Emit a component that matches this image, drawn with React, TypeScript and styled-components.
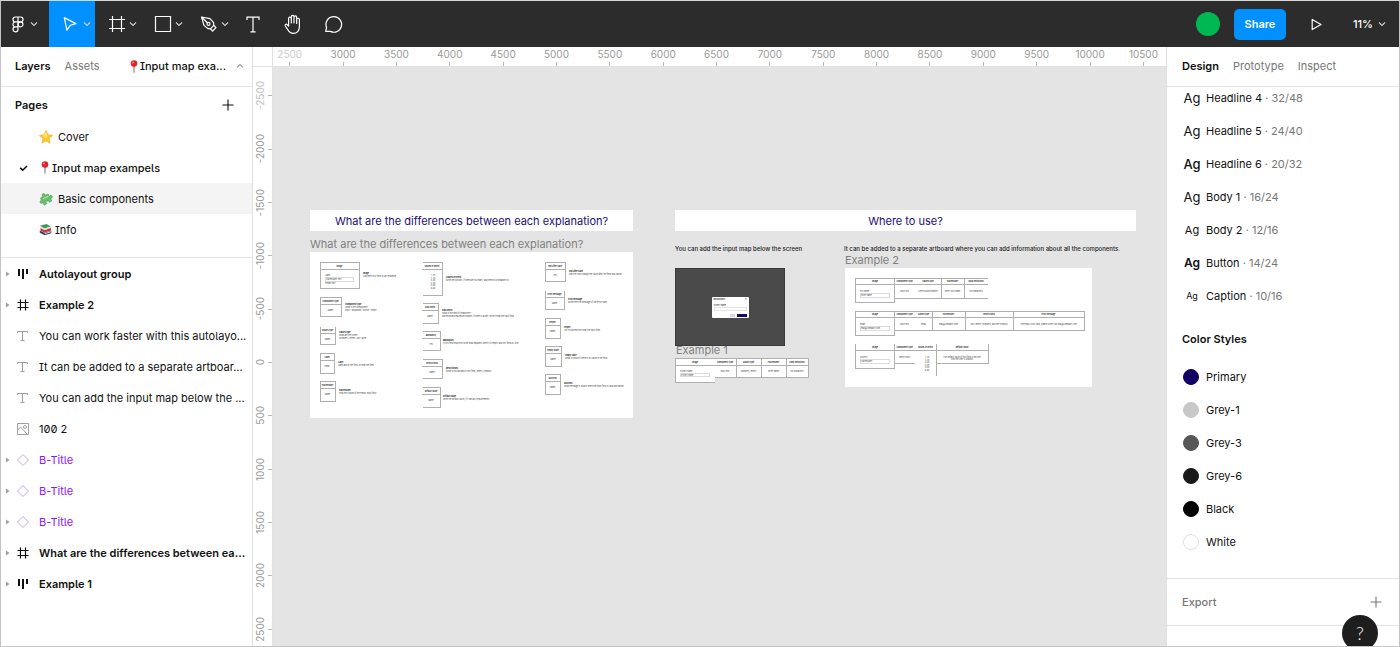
import React from "react";
import styled, { createGlobalStyle, css } from "styled-components";

const Global = createGlobalStyle`
  *, *::before, *::after { box-sizing: border-box; }
  body { margin: 0; font-family: Inter, "Liberation Sans", sans-serif; font-size: 11px; line-height: 16px; color: #111; }
  button { font: inherit; color: inherit; background: none; border: 0; padding: 0; margin: 0; cursor: pointer; }
  ul { list-style: none; margin: 0; padding: 0; }
  h2 { font: inherit; font-weight: 600; margin: 0; }
  svg { display: block; flex: none; }
`;

/* ---------- shell ---------- */
const Shell = styled.div`
  position: relative;
  display: flex;
  flex-direction: column;
  height: 100vh;
  border: 1px solid #c4c4c4;
  border-top-color: #d6d6d6;
  overflow: hidden;
  background: #fff;
`;
const Body = styled.div`
  flex: 1;
  min-height: 0;
  display: grid;
  grid-template-columns: 252px minmax(0, 1fr) 233px;
`;

/* ---------- toolbar ---------- */
const Toolbar = styled.header`
  flex: none;
  display: flex;
  justify-content: space-between;
  height: 46px;
  background: #2c2c2c;
  color: #fff;
`;
const ToolGroup = styled.nav`
  display: flex;
`;
const Tool = styled.button<{ $active?: boolean }>`
  display: flex;
  align-items: center;
  justify-content: center;
  gap: 3px;
  width: 46px;
  padding-left: 8px;
  background: ${(p) => (p.$active ? "#0090ff" : "transparent")};
`;
const MenuTool = styled(Tool)`
  gap: 6px;
  width: 48px;
  padding-left: 0;
`;
const SingleTool = styled(Tool)`
  width: 40px;
  padding-left: 0;
`;
const Actions = styled.div`
  display: flex;
  align-items: center;
`;
const Avatar = styled.span`
  width: 24px;
  height: 24px;
  border-radius: 50%;
  background: #00b853;
`;
const Share = styled.button`
  width: 52px;
  height: 31px;
  margin-left: 14px;
  border-radius: 5px;
  background: #0090ff;
  font-weight: 600;
`;
const Play = styled.button`
  margin-left: 24px;
`;
const Zoom = styled.button`
  display: flex;
  align-items: center;
  gap: 5px;
  margin: 0 13px 0 30px;
  font-weight: 500;
`;

/* ---------- side panels ---------- */
const Panel = styled.aside<{ $side: "left" | "right" }>`
  display: flex;
  flex-direction: column;
  min-height: 0;
  overflow: hidden;
  background: #fff;
  ${(p) => (p.$side === "left" ? "border-right" : "border-left")}: 1px solid #e0e0e0;
`;
const Tabs = styled.div<{ $inset: number }>`
  flex: none;
  display: flex;
  align-items: center;
  gap: 14px;
  height: 40px;
  padding: 0 8px 1px ${(p) => p.$inset}px;
  border-bottom: 1px solid #e2e2e2;
`;
const Tab = styled.button<{ $active?: boolean }>`
  font-weight: ${(p) => (p.$active ? 600 : 400)};
  color: ${(p) => (p.$active ? "#111" : "#777")};
`;

/* Layer and page names use the disambiguated forms of I, l and 0. */
const plainForms = css`
  font-feature-settings: "ss02", "zero";
`;
const PageSelect = styled.button`
  display: flex;
  align-items: center;
  margin-left: auto;
  font-weight: 500;
  ${plainForms}
`;
const PageSelectText = styled.span`
  margin-right: 10px;
`;
const SectionHead = styled.div`
  display: flex;
  align-items: center;
  justify-content: space-between;
  height: 34px;
  padding: 2px 18px 0 14px;
`;
const Pages = styled.section`
  flex: none;
  padding-bottom: 12px;
  border-bottom: 1px solid #e2e2e2;
`;
const PageRow = styled.li<{ $hover?: boolean; $current?: boolean }>`
  display: flex;
  align-items: center;
  height: 31px;
  padding-left: 14px;
  background: ${(p) => (p.$hover ? "#f4f4f4" : "transparent")};
  font-weight: ${(p) => (p.$current ? 500 : 400)};
  ${plainForms}
`;
const PageMark = styled.span`
  width: 24px;
  padding-left: 4px;
`;
const PageEmoji = styled.span<{ $width: number }>`
  width: ${(p) => p.$width}px;
`;
const LayerRow = styled.li<{ $kind: Kind; $bold?: boolean }>`
  display: grid;
  grid-template-columns: 8px 26px minmax(0, 1fr);
  align-items: center;
  height: 31px;
  padding-left: 4px;
  font-weight: ${(p) => (p.$bold ? 600 : 400)};
  ${plainForms}
  ${(p) => p.$kind === "instance" && css`color: #9013fe;`}
`;
const LayerIcon = styled.span`
  display: flex;
  padding-left: 3px;
`;
const LayerName = styled.span`
  white-space: nowrap;
`;

/* ---------- canvas ---------- */
const CanvasArea = styled.main`
  display: grid;
  grid-template: 20px minmax(0, 1fr) / 20px minmax(0, 1fr);
  min-height: 0;
  background: #e4e4e4;
`;
const Corner = styled.div`
  background: #fff;
  border: solid #e2e2e2;
  border-width: 0 1px 1px 0;
`;
const TopRuler = styled.div`
  overflow: hidden;
  background: #fff;
  border-bottom: 1px solid #e2e2e2;
`;
const TopMarks = styled.ol`
  display: flex;
  width: calc(100% + 14px);
  height: 100%;
  margin: 0 0 0 -10px;
  padding: 0;
  list-style: none;
`;
const TopMark = styled.li<{ $faint?: boolean }>`
  flex: 1 1 0;
  display: flex;
  flex-direction: column;
  align-items: center;
  justify-content: space-between;
  font-size: 10px;
  line-height: 15px;
  color: ${(p) => (p.$faint ? "#cccccc" : "#999")};
  &::after { content: ""; width: 1px; height: 4px; background: #b8b8b8; }
`;
const SideRuler = styled.div`
  overflow: hidden;
  background: #fff;
  border-right: 1px solid #e2e2e2;
`;
const SideMarks = styled.ol`
  display: flex;
  flex-direction: column;
  height: calc(100% + 8px);
  margin: 2px 0 0;
  padding: 0;
  list-style: none;
`;
const SideMark = styled.li<{ $faint?: boolean }>`
  flex: 1 1 0;
  display: flex;
  align-items: center;
  justify-content: space-between;
  font-size: 10px;
  color: ${(p) => (p.$faint ? "#c0c0c0" : "#999")};
  &::after { content: ""; width: 4px; height: 1px; background: #b8b8b8; }
`;
const SideLabel = styled.span`
  writing-mode: vertical-rl;
  transform: rotate(180deg);
  line-height: 15px;
`;
const Canvas = styled.div`
  position: relative;
  overflow: hidden;
`;
const Node = styled.div<{ $x: number; $y: number }>`
  position: absolute;
  left: ${(p) => p.$x}px;
  top: ${(p) => p.$y}px;
  white-space: nowrap;
`;
const TitleFrame = styled(Node)<{ $w: number }>`
  width: ${(p) => p.$w}px;
  height: 21px;
  background: #fff;
  color: #1c0d75;
  text-align: center;
  line-height: 22px;
`;
const FrameLabel = styled(Node)`
  color: #808080;
`;
const Note = styled(Node)`
  font-size: 6px;
  font-weight: 500;
  line-height: 8px;
  color: #222;
`;

/* ---------- right panel ---------- */
const Styles = styled.div`
  flex: none;
  margin-top: -6px;
  padding-bottom: 20px;
  border-bottom: 1px solid #e2e2e2;
`;
const StyleRow = styled.li`
  display: grid;
  grid-template-columns: 18px 1fr;
  column-gap: 5px;
  align-items: center;
  height: 33px;
  padding-left: 16px;
`;
const Sample = styled.span<{ $size: number; $weight: number }>`
  text-align: center;
  font-size: ${(p) => p.$size}px;
  font-weight: ${(p) => p.$weight};
`;
const Spec = styled.span`
  color: #777;
`;
const StylesTitle = styled.h2`
  height: 33px;
  margin: 11px 0 4px;
  padding-left: 15px;
  line-height: 33px;
`;
const Swatch = styled.span<{ $color: string }>`
  width: 16px;
  height: 16px;
  border-radius: 50%;
  background: ${(p) => p.$color};
  border: 1px solid ${(p) => (p.$color === "#ffffff" ? "#e0e0e0" : p.$color)};
`;
const Export = styled.div`
  flex: none;
  display: flex;
  align-items: center;
  justify-content: space-between;
  height: 47px;
  padding: 0 17px 0 15px;
  border-bottom: 1px solid #e2e2e2;
  color: #777;
  font-weight: 500;
`;
const Help = styled.button`
  position: absolute;
  right: 21px;
  bottom: -5px;
  display: flex;
  align-items: center;
  justify-content: center;
  width: 36px;
  height: 36px;
  border-radius: 50%;
  background: #1e1e1e;
  color: #fff;
  font-family: Lato, Inter, sans-serif;
  font-size: 18px;
  font-weight: 300;
`;

/* ---------- icons ---------- */
const Chevron = ({ up, color = "#d0d0d0" }: { up?: boolean; color?: string }) => (
  <svg width="8" height="6" viewBox="0 0 8 6" fill="none" stroke={color} strokeWidth="1.1">
    <path d={up ? "M1 4.5 4 1.5 7 4.5" : "M1 1.5 4 4.5 7 1.5"} />
  </svg>
);
const FigmaIcon = () => (
  <svg width="12" height="17" viewBox="0 0 12 17" fill="none" stroke="#fff" strokeWidth="1.2">
    <path d="M6 1H3.4a2.4 2.4 0 0 0 0 4.9H6zM6 1h2.6a2.4 2.4 0 0 1 0 4.9H6zM6 5.9H3.4a2.4 2.4 0 0 0 0 4.9H6zM6 10.8H3.4A2.5 2.5 0 1 0 6 13.4z" />
    <circle cx="8.5" cy="8.35" r="2.45" />
  </svg>
);
const MoveIcon = () => (
  <svg width="18" height="18" viewBox="0 0 18 18" fill="none" stroke="#fff" strokeWidth="1.2" strokeLinejoin="round">
    <path d="M2.3 2.6 13.8 8.6 8.2 10.3 4.9 15.2z" />
  </svg>
);
const FrameIcon = () => (
  <svg width="18" height="18" viewBox="0 0 18 18" fill="none" stroke="#fff" strokeWidth="1.2">
    <path d="M4.5 1v16M13.500 1v16M1 4.500h16M1 13.500h16" />
  </svg>
);
const RectIcon = () => (
  <svg width="18" height="18" viewBox="0 0 18 18" fill="none" stroke="#fff" strokeWidth="1.2">
    <path d="M1.5 1.5h15v15h-15z" />
  </svg>
);
const PenIcon = () => (
  <svg width="18" height="18" viewBox="0 0 18 18" fill="none" stroke="#fff" strokeWidth="1.2" strokeLinejoin="round">
    <path d="M1.500 2 10 3.600 13.600 7.600 13.800 10.400 10.400 13.800 7.600 13.400 4 10.400z" />
    <path d="M10.400 13.800 12.600 16 16 12.600 13.800 10.400M1.500 2 7.400 7.800" />
    <circle cx="8.500" cy="8.900" r="1.500" />
  </svg>
);
const TextIcon = () => (
  <svg width="14" height="17" viewBox="0 0 14 17" fill="none" stroke="#fff" strokeWidth="1.2">
    <path d="M1 4V1.200h12V4M7 1.200v14.400M4.400 15.800h5.200" />
  </svg>
);
const HandIcon = () => (
  <svg width="20" height="21" viewBox="0 0 20 21" fill="none" stroke="#fff" strokeWidth="1.2" strokeLinecap="round" strokeLinejoin="round">
    <path d="M5.6 12.2V4.4a1.35 1.35 0 0 1 2.7 0V9M8.3 9V2.7a1.35 1.35 0 0 1 2.7 0V9M11 9V3.2a1.35 1.35 0 0 1 2.7 0v6.3M13.7 9.5V5.6a1.35 1.35 0 0 1 2.7 0v7.2c0 3.8-2.5 6.6-5.9 6.6-2.9 0-4.4-1.3-5.6-3.6L2.3 12c-.7-1.2.9-2.4 1.9-1.3l1.4 1.5" />
  </svg>
);
const CommentIcon = () => (
  <svg width="19" height="19" viewBox="0 0 19 19" fill="none" stroke="#fff" strokeWidth="1.2" strokeLinejoin="round">
    <path d="M9.800 1.600a7.800 7.800 0 1 1-3.400 14.800H1.700l.9-3.900A7.800 7.800 0 0 1 9.800 1.600z" />
  </svg>
);
const PlayIcon = () => (
  <svg width="13" height="13" viewBox="0 0 13 13" fill="none" stroke="#fff" strokeWidth="1.2" strokeLinejoin="round">
    <path d="M2.2 1.4 11 6.5 2.2 11.6z" />
  </svg>
);
const PlusIcon = ({ color }: { color: string }) => (
  <svg width="12" height="12" viewBox="0 0 12 12" fill="none" stroke={color} strokeWidth="1.1">
    <path d="M6 .5v11M.5 6h11" />
  </svg>
);
const CheckIcon = () => (
  <svg width="10" height="8" viewBox="0 0 10 8" fill="none" stroke="#111" strokeWidth="1.600">
    <path d="M1.200 3.800 3.700 6.200 8 2" />
  </svg>
);
const StarEmoji = () => (
  <svg width="14" height="14" viewBox="0 0 14 14">
    <path d="M7 .4 9 4.8l4.8.5-3.6 3.2 1 4.8L7 10.9l-4.200 2.400 1-4.800L.2 5.300 5 4.800z" fill="#fcc72b" stroke="#eda91e" strokeWidth=".5" />
    <path d="M7 2 8.300 5.600 7 8.500 4 6z" fill="#ffe27a" />
  </svg>
);
const PinEmoji = () => (
  <svg width="12" height="13" viewBox="-2 0 12 13">
    <path d="M3.400 6h1.200L4.300 12.600h-.6z" fill="#8f8f8f" stroke="#8f8f8f" strokeWidth=".4" />
    <circle cx="4" cy="3.500" r="3.300" fill="#e0242b" />
    <circle cx="3" cy="2.400" r="1" fill="#f98a8a" />
  </svg>
);
const PuzzleEmoji = () => (
  <svg width="14" height="14" viewBox="0 0 14 14">
    <g transform="rotate(-28 7 7)" fill="#69bd6c" stroke="#4a9c56" strokeWidth=".5">
      <path d="M2.500 3.500h3c-.9-1.500 0-2.600 1.200-2.600s2.100 1.100 1.200 2.600h3.300v2.700c1.500-.8 2.500.1 2.500 1.200s-1 1.900-2.500 1.100v3H8.300c.7-1.500-.3-2.100-1.400-2.100s-2 .6-1.300 2.100H2.500V8.700C1 9.400.2 8.500.2 7.400S1 5.400 2.500 6.200z" />
    </g>
    <path d="M4 6.800 9.400 4.400" stroke="#a5e3a0" strokeWidth="1.200" />
  </svg>
);
const BooksEmoji = () => (
  <svg width="13" height="13" viewBox="0 0 13 13">
    <path d="M.8 2.800 7.500 1l4.300 2.500-6.300 2z" fill="#3f9a5a" />
    <path d="m.8 2.800 4.700 2.700 6.300-2v1.400L5.500 7 .8 4.300z" fill="#d8e6d8" />
    <path d="m1.500 5 4 2.200L12 5.100v2.400L5.500 9.500l-4-2z" fill="#d8292f" />
    <path d="m.8 7.600 4.700 2.200L12.300 7.700v2.600l-6.600 2L.8 9.700z" fill="#33415e" />
    <path d="m5.700 10.700 6.300-1.900" stroke="#e8e8e8" strokeWidth=".9" />
  </svg>
);

type Kind = "auto" | "frame" | "text" | "image" | "instance";
const KindIcon = ({ kind }: { kind: Kind }) => {
  switch (kind) {
    case "auto":
      return (
        <svg width="14" height="14" viewBox="0 0 14 14" stroke="#111" strokeWidth="2">
          <path d="M3 2v7M7 2v10M11 2v5" />
        </svg>
      );
    case "frame":
      return (
        <svg width="14" height="14" viewBox="0 0 14 14" stroke="#111" strokeWidth="1.200">
          <path d="M4.500 1.500v11M9.500 1.500v11M1.500 4.500h11M1.500 9.500h11" />
        </svg>
      );
    case "text":
      return (
        <svg width="14" height="14" viewBox="0 0 14 14" fill="none" stroke="#a0a0a0" strokeWidth="1">
          <path d="M1.500 4V2.500h10V4M6.500 2.500v9M4.500 11.500h4" />
        </svg>
      );
    case "image":
      return (
        <svg width="14" height="14" viewBox="0 0 14 14" fill="none" stroke="#a0a0a0" strokeWidth="1">
          <path d="M1.500 1.500h11v11h-11zM1.500 8 4.500 5l7 7.500" />
          <circle cx="9" cy="5" r="1.500" />
        </svg>
      );
    case "instance":
      return (
        <svg width="14" height="14" viewBox="0 0 14 14" fill="none" stroke="#c9a6e8" strokeWidth="1">
          <path d="M7 1.500 12.500 7 7 12.500 1.500 7z" />
        </svg>
      );
  }
};
const Arrow = () => (
  <svg width="5" height="6" viewBox="0 0 5 6">
    <path d="M1 .5 4.500 3 1 5.500z" fill="#a0a0a0" />
  </svg>
);

/* ---------- miniature artboards ---------- */
type Cell = {
  x: number; y: number; w: number; h: number;
  open?: "left" | "top";
  head: string; body?: string; title: string; lines: string[]; tx: number; ty: number;
};

const explanations: Cell[] = [
  { x: 10, y: 10, w: 39, h: 26, head: "Image", title: "Image", lines: ["Add here your field or any example"], tx: 53, ty: 22 },
  { x: 10, y: 45, w: 21, h: 19, head: "Component type", body: "Name", title: "Component type", lines: ["What is the component?", "Input / dropdown / button / select"], tx: 35, ty: 53 },
  { x: 10, y: 74, w: 15, h: 18, open: "top", head: "Values type", body: "Name", title: "Values type", lines: ["What are the types?", "Numbers / letters / any value"], tx: 29, ty: 81 },
  { x: 10, y: 101, w: 14, h: 20, head: "Label", body: "Email", title: "Label", lines: ["Label above the field, or near the field"], tx: 28, ty: 111 },
  { x: 10, y: 129, w: 15, h: 20, head: "Placeholder", body: "Name", title: "Placeholder", lines: ["Help text inside of the empty input field"], tx: 29, ty: 139 },
  { x: 112, y: 10, w: 20, h: 33, open: "left", head: "Values in select", title: "Values in select", lines: ["Write the options. If there are too many, add them in a separate list"], tx: 136, ty: 26 },
  { x: 112, y: 51, w: 16, h: 20, open: "left", head: "Data limits", body: "Name", title: "Data limits", lines: ["What is the limit of characters?", "Minimum and maximum number. If there is a limit, write it near the input field"], tx: 132, ty: 59 },
  { x: 112, y: 79, w: 18, h: 19, open: "left", head: "Mandatory", body: "Yes", title: "Mandatory", lines: ["Is this field required? Write what happens when it is empty and not filled by user"], tx: 133, ty: 89 },
  { x: 112, y: 107, w: 20, h: 19, open: "left", head: "Restrictions", body: "Name", title: "Restrictions", lines: ["What is not allowed in this field, letters, symbols"], tx: 136, ty: 117 },
  { x: 112, y: 135, w: 18, h: 20, open: "left", head: "Default value", body: "Name", title: "Default value", lines: ["Write the default value, if it has any requirements"], tx: 133, ty: 145 },
  { x: 235, y: 10, w: 20, h: 19, head: "Edit after save", body: "Yes", title: "Edit after save", lines: ["Can the user change the value after the field was saved"], tx: 259, ty: 20 },
  { x: 235, y: 38, w: 19, h: 19, open: "top", head: "Error message", body: "Name", title: "Error message", lines: ["Write here the message of the error state"], tx: 258, ty: 48 },
  { x: 235, y: 66, w: 15, h: 20, head: "Helper", body: "Name", title: "Helper", lines: ["Any extra help text near the input field"], tx: 254, ty: 76 },
  { x: 235, y: 94, w: 16, h: 20, head: "Empty state", body: "Name", title: "Empty state", lines: ["What is shown if there is no value in the field"], tx: 255, ty: 104 },
  { x: 235, y: 122, w: 15, h: 20, head: "Success", body: "Name", title: "Success", lines: ["What message is shown when the input field is valid and saved"], tx: 254, ty: 132 },
];

const cellOutline = ({ x, y, w, h, open }: Cell) => {
  const l = x + 0.5;
  const t = y + 0.5;
  if (open === "left") return `M${l} ${t}h${w}v${h}h${-w}`;
  if (open === "top") return `M${l} ${t}v${h}h${w}v${-h}`;
  return `M${l} ${t}h${w}v${h}h${-w}z`;
};

const Mini = styled.svg`
  font-family: Inter, "Liberation Sans", sans-serif;
  font-size: 2px;
  fill: #444;
  & rect, & path { fill: none; stroke: #b0b0b0; stroke-width: 1; shape-rendering: crispEdges; }
  & .page { fill: #fff; stroke: none; }
  & .faint { stroke: #dcdcdc; }
  & .head { font-weight: 600; fill: #111; text-anchor: middle; }
  & .title { font-weight: 700; fill: #111; }
  & .mid { text-anchor: middle; }
`;

const selectValues = ["1-10", "2-20", "3-30", "4-40", "5-50", "6-60"];

const Explanations = () => (
  <Mini width="323" height="166" viewBox="0 0 323 166">
    <rect className="page" width="323" height="166" />
    {explanations.map((c) => (
      <g key={c.title}>
        <path d={cellOutline(c)} />
        <path d={`M${c.x} ${c.y + 7.5}h${c.w}`} />
        <text className="head" x={c.x + c.w / 2} y={c.y + 5}>{c.head}</text>
        {c.body && <text className="mid" x={c.x + c.w / 2} y={c.y + 14}>{c.body}</text>}
        <text className="title" x={c.tx} y={c.ty}>{c.title}</text>
        {c.lines.map((l, i) => (
          <text key={l} x={c.tx} y={c.ty + 3 + i * 3}>{l}</text>
        ))}
      </g>
    ))}
    <text x="15" y="24">Label</text>
    <rect className="faint" x="15.5" y="25.5" width="28" height="4" />
    <text x="16" y="28">Placeholder text</text>
    <text x="15" y="32">Helper text</text>
    {selectValues.map((t, i) => (
      <text key={t} className="mid" x="123" y={24 + i * 2.5}>{t}</text>
    ))}
  </Mini>
);

type Col = { x: number; w: number; head: string; body: string[] };
type Table = { y: number; h: number; label: string; hint: string; lines: string; cols: Col[] };

const tables: Table[] = [
  {
    y: 10, h: 20, label: "Full name", hint: "Enter name",
    lines: "M10 10.500H143M10 16.500H143M49 30.500H143M96.500 10v20M119.500 10v20",
    cols: [
      { x: 49, w: 21, head: "Component type", body: ["Input text"] },
      { x: 70, w: 26, head: "Values type", body: ["Letters and numbers"] },
      { x: 96, w: 23, head: "Placeholder", body: ["Enter your name"] },
      { x: 119, w: 24, head: "Data limitations", body: ["50 characters"] },
    ],
  },
  {
    y: 43, h: 20, label: "Email", hint: "mail@company.com",
    lines: "M10 43.500H239.500V62.500H49M10 49.500H239M87.500 43v19M120.500 43v19M168.500 43v19",
    cols: [
      { x: 49, w: 21, head: "Component type", body: ["Input text"] },
      { x: 70, w: 17, head: "Values type", body: ["Email"] },
      { x: 87, w: 33, head: "Placeholder", body: ["mail@company.com"] },
      { x: 120, w: 48, head: "Restrictions", body: ["Only letters, numbers, and the symbols"] },
      { x: 168, w: 71, head: "Error message", body: ["The email is not valid, please write it as mail@company.com"] },
    ],
  },
  {
    y: 76, h: 19, label: "Country", hint: "Placeholder",
    lines: "M10 82.500H143M49 95.500H70M91.500 76v32M91 95.500H143M143.500 76v20",
    cols: [
      { x: 49, w: 21, head: "Component type", body: ["Select input"] },
      { x: 70, w: 21, head: "Values in select", body: [] },
      { x: 91, w: 52, head: "Default value", body: ["The default value of this field is the one", "with the user's location"] },
    ],
  },
];

const ExampleTwo = () => (
  <Mini width="247" height="119" viewBox="0 0 247 119">
    <rect className="page" width="247" height="119" />
    {tables.map((t) => (
      <g key={t.label}>
        <path d={`M10.5 ${t.y}v24.5h39v-24.5`} />
        <path d={t.lines} />
        <text className="head" x="30" y={t.y + 4}>Image</text>
        <text x="15" y={t.y + 14}>{t.label}</text>
        <rect className="faint" x="15.5" y={t.y + 15.5} width="29" height="4" />
        <text x="16" y={t.y + 18}>{t.hint}</text>
        {t.cols.map((c) => (
          <g key={c.head}>
            <text className="head" x={c.x + c.w / 2} y={t.y + 4}>{c.head}</text>
            {c.body.map((b, i) => (
              <text key={b} className="mid" x={c.x + c.w / 2} y={t.y + 14 + i * 2}>{b}</text>
            ))}
          </g>
        ))}
      </g>
    ))}
    {selectValues.map((v, i) => (
      <text key={v} className="mid" x="82" y={90 + i * 2.5}>{v}</text>
    ))}
  </Mini>
);

const exampleOneCols: Col[] = [
  { x: 39, w: 22, head: "Component type", body: ["Input text"] },
  { x: 61, w: 25, head: "Values type", body: ["Numbers, letters"] },
  { x: 86, w: 25, head: "Placeholder", body: ["Enter name"] },
  { x: 111, w: 22, head: "Data limitations", body: ["50 characters"] },
];
const ExampleOne = () => (
  <Mini width="135" height="25" viewBox="0 0 135 25">
    <rect className="page" width="134" height="20" />
    <rect className="page" width="40" height="25" />
    <path d="M0 .5h134M0 7.5h134M40 19.5h94M.5 0v24.5h39" />
    <text className="head" x="20" y="5">Image</text>
    <text x="5" y="14">Project name</text>
    <rect className="faint" x="5.5" y="15.5" width="29" height="3" />
    <text x="6" y="18">Project name</text>
    {exampleOneCols.map((c) => (
      <g key={c.head}>
        <path d={`M${c.x + c.w + 0.5} 0v20`} />
        <text className="head" x={c.x + c.w / 2} y="5">{c.head}</text>
        <text className="mid" x={c.x + c.w / 2} y="14">{c.body[0]}</text>
      </g>
    ))}
  </Mini>
);

const Screen = styled(Node)`
  display: flex;
  align-items: center;
  justify-content: center;
  width: 110px;
  height: 78px;
  background: #4a4a4a;
  border: 1px solid #3a3a3a;
`;
const Dialog = styled.div`
  display: flex;
  flex-direction: column;
  width: 37px;
  height: 21px;
  padding: 1px 2px;
  border-radius: 1px;
  background: #fff;
  font-size: 2px;
  line-height: 3px;
  color: #222;
`;
const DialogHead = styled.div`
  display: flex;
  justify-content: space-between;
  margin-bottom: 3px;
  font-weight: 600;
`;
const DialogField = styled.div`
  height: 4px;
  border: 1px solid #e4e4e4;
`;
const DialogButtons = styled.div`
  display: flex;
  justify-content: flex-end;
  gap: 2px;
  margin-top: auto;
`;
const DialogButton = styled.span<{ $primary?: boolean }>`
  width: ${(p) => (p.$primary ? 10 : 5)}px;
  height: 3px;
  background: ${(p) => (p.$primary ? "#160a70" : "#d9d7ee")};
`;

/* ---------- data ---------- */
const layers: { kind: Kind; name: string; bold?: boolean; open?: boolean }[] = [
  { kind: "auto", name: "Autolayout group", bold: true, open: true },
  { kind: "frame", name: "Example 2", bold: true, open: true },
  { kind: "text", name: "You can work faster with this autolayo..." },
  { kind: "text", name: "It can be added to a separate artboar..." },
  { kind: "text", name: "You can add the input map below the ..." },
  { kind: "image", name: "100 2" },
  { kind: "instance", name: "B-Title", open: true },
  { kind: "instance", name: "B-Title", open: true },
  { kind: "instance", name: "B-Title", open: true },
  { kind: "frame", name: "What are the differences between ea...", bold: true, open: true },
  { kind: "auto", name: "Example 1", bold: true, open: true },
];
const textStyles = [
  { name: "Headline 4", spec: "32/48", size: 13, weight: 400 },
  { name: "Headline 5", spec: "24/40", size: 13, weight: 400 },
  { name: "Headline 6", spec: "20/32", size: 13, weight: 500 },
  { name: "Body 1", spec: "16/24", size: 13, weight: 400 },
  { name: "Body 2", spec: "12/16", size: 11, weight: 400 },
  { name: "Button", spec: "14/24", size: 12, weight: 600 },
  { name: "Caption", spec: "10/16", size: 9, weight: 400 },
];
const colors = [
  ["Primary", "#100064"],
  ["Grey-1", "#c8c8c8"],
  ["Grey-3", "#575757"],
  ["Grey-6", "#191919"],
  ["Black", "#000000"],
  ["White", "#ffffff"],
];
const topTicks = Array.from({ length: 17 }, (_, i) => 2500 + i * 500);
const sideTicks = Array.from({ length: 11 }, (_, i) => -2500 + i * 500);

export default function App() {
  return (
    <Shell>
      <Global />
      <Toolbar>
        <ToolGroup aria-label="Tools">
          <MenuTool aria-label="Main menu"><FigmaIcon /><Chevron /></MenuTool>
          <Tool $active aria-label="Move"><MoveIcon /><Chevron /></Tool>
          <Tool aria-label="Frame"><FrameIcon /><Chevron /></Tool>
          <Tool aria-label="Rectangle"><RectIcon /><Chevron /></Tool>
          <Tool aria-label="Pen"><PenIcon /><Chevron /></Tool>
          <SingleTool aria-label="Text"><TextIcon /></SingleTool>
          <SingleTool aria-label="Hand"><HandIcon /></SingleTool>
          <SingleTool aria-label="Comment"><CommentIcon /></SingleTool>
        </ToolGroup>
        <Actions>
          <Avatar />
          <Share>Share</Share>
          <Play aria-label="Present"><PlayIcon /></Play>
          <Zoom>11%<Chevron /></Zoom>
        </Actions>
      </Toolbar>
      <Body>
        <Panel $side="left">
          <Tabs $inset={14}>
            <Tab $active>Layers</Tab>
            <Tab>Assets</Tab>
            <PageSelect><PinEmoji /><PageSelectText>Input map exa...</PageSelectText><Chevron up color="#a0a0a0" /></PageSelect>
          </Tabs>
          <Pages>
            <SectionHead>
              <h2>Pages</h2>
              <button aria-label="Add page"><PlusIcon color="#111" /></button>
            </SectionHead>
            <ul>
              <PageRow><PageMark /><PageEmoji $width={19}><StarEmoji /></PageEmoji>Cover</PageRow>
              <PageRow $current><PageMark><CheckIcon /></PageMark><PageEmoji $width={13}><PinEmoji /></PageEmoji>Input map exampels</PageRow>
              <PageRow $hover><PageMark /><PageEmoji $width={19}><PuzzleEmoji /></PageEmoji>Basic components</PageRow>
              <PageRow><PageMark /><PageEmoji $width={16}><BooksEmoji /></PageEmoji>Info</PageRow>
            </ul>
          </Pages>
          <ul>
            {layers.map((l, i) => (
              <LayerRow key={i} $kind={l.kind} $bold={l.bold}>
                <span>{l.open && <Arrow />}</span>
                <LayerIcon><KindIcon kind={l.kind} /></LayerIcon>
                <LayerName>{l.name}</LayerName>
              </LayerRow>
            ))}
          </ul>
        </Panel>
        <CanvasArea>
          <Corner />
          <TopRuler>
            <TopMarks>
              {topTicks.map((t) => <TopMark key={t} $faint={t === 2500}>{t}</TopMark>)}
            </TopMarks>
          </TopRuler>
          <SideRuler>
            <SideMarks>
              {sideTicks.map((t) => <SideMark key={t} $faint={t === -2500}><SideLabel>{t}</SideLabel></SideMark>)}
            </SideMarks>
          </SideRuler>
          <Canvas>
            <TitleFrame $x={37} $y={143} $w={323}>What are the differences between each explanation?</TitleFrame>
            <FrameLabel $x={37} $y={169}>What are the differences between each explanation?</FrameLabel>
            <Node $x={37} $y={185}><Explanations /></Node>
            <TitleFrame $x={402} $y={143} $w={461}>Where to use?</TitleFrame>
            <Note $x={402} $y={178}>You can add the input map below the screen</Note>
            <Screen $x={402} $y={201}>
              <Dialog>
                <DialogHead><span>New project</span><span>x</span></DialogHead>
                <span>Project name</span>
                <DialogField />
                <DialogButtons><DialogButton /><DialogButton $primary /></DialogButtons>
              </Dialog>
            </Screen>
            <FrameLabel $x={403} $y={275}>Example 1</FrameLabel>
            <Node $x={402} $y={291}><ExampleOne /></Node>
            <Note $x={571} $y={178}>It can be added to a separate artboard where you can add information about all the components.</Note>
            <FrameLabel $x={572} $y={185}>Example 2</FrameLabel>
            <Node $x={572} $y={201}><ExampleTwo /></Node>
          </Canvas>
        </CanvasArea>
        <Panel $side="right">
          <Tabs $inset={15}>
            <Tab $active>Design</Tab>
            <Tab>Prototype</Tab>
            <Tab>Inspect</Tab>
          </Tabs>
          <Styles>
            <ul>
              {textStyles.map((s) => (
                <StyleRow key={s.name}>
                  <Sample $size={s.size} $weight={s.weight}>Ag</Sample>
                  <span>{s.name} <Spec>· {s.spec}</Spec></span>
                </StyleRow>
              ))}
            </ul>
            <StylesTitle>Color Styles</StylesTitle>
            <ul>
              {colors.map(([name, color]) => (
                <StyleRow key={name}><Swatch $color={color} />{name}</StyleRow>
              ))}
            </ul>
          </Styles>
          <Export>
            Export
            <button aria-label="Add export"><PlusIcon color="#777" /></button>
          </Export>
        </Panel>
      </Body>
      <Help aria-label="Help">?</Help>
    </Shell>
  );
}
